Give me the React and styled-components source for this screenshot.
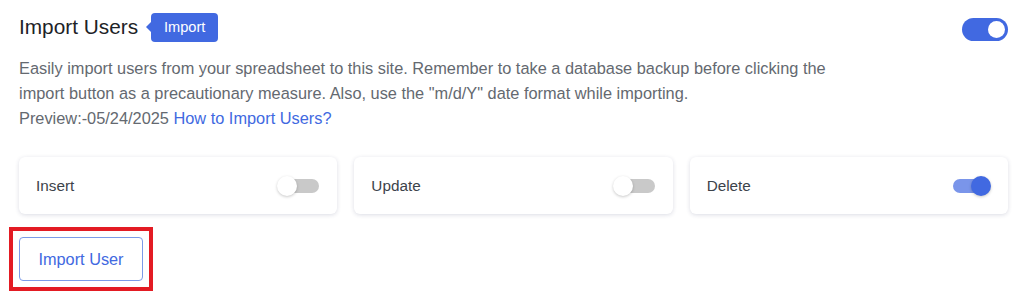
import React from 'react';
import styled, { createGlobalStyle } from 'styled-components';

const GlobalStyle = createGlobalStyle`
  body {
    margin: 0;
    background: #ffffff;
    font-family: 'Liberation Sans', Arial, sans-serif;
  }
`

const options = [
  { label: 'Insert', on: false },
  { label: 'Update', on: false },
  { label: 'Delete', on: true },
]

export default function App() {
  return (
    <>
      <GlobalStyle />
      <Panel>
        <Header>
          <TitleWrap>
            <Title>Import Users</Title>
            <Badge>Import</Badge>
          </TitleWrap>
          <MainSwitch>
            <MainKnob />
          </MainSwitch>
        </Header>
        <Description>
          Easily import users from your spreadsheet to this site. Remember to take a database backup before clicking the
          <br />
          import button as a precautionary measure. Also, use the "m/d/Y" date format while importing.
          <br />
          Preview:-05/24/2025 <HelpLink href="#">How to Import Users?</HelpLink>
        </Description>
        <CardGrid>
          {options.map((opt) => (
            <OptionCard key={opt.label}>
              <OptionLabel>{opt.label}</OptionLabel>
              <SmallSwitch $on={opt.on}>
                <SmallKnob $on={opt.on} />
              </SmallSwitch>
            </OptionCard>
          ))}
        </CardGrid>
        <Highlight>
          <ImportButton type="button">Import User</ImportButton>
        </Highlight>
      </Panel>
    </>
  )
}

// Styled components
const Panel = styled.div`
  padding: 12px 16px 0 19px;
`

const Header = styled.div`
  display: flex;
  align-items: center;
  justify-content: space-between;
  height: 30px;
`

const TitleWrap = styled.div`
  display: flex;
  align-items: center;
  gap: 13px;
`

const Title = styled.h2`
  margin: 0;
  font-size: 20.8px;
  font-weight: 400;
  color: #1d2327;
`

const Badge = styled.span`
  position: relative;
  display: inline-flex;
  align-items: center;
  height: 29px;
  padding: 0 13px;
  border-radius: 4px;
  background: #4169e1;
  color: #ffffff;
  font-size: 14.6px;
  &::before {
    content: '';
    position: absolute;
    left: -5px;
    top: 50%;
    transform: translateY(-50%);
    border-style: solid;
    border-width: 5px 5px 5px 0;
    border-color: transparent #4169e1 transparent transparent;
  }
`

const MainSwitch = styled.div`
  display: flex;
  align-items: center;
  justify-content: flex-end;
  width: 46px;
  height: 23px;
  margin-top: 5px;
  padding: 0 3px;
  box-sizing: border-box;
  border-radius: 12px;
  background: #4169e1;
`

const MainKnob = styled.span`
  width: 17px;
  height: 17px;
  border-radius: 50%;
  background: #ffffff;
`

const Description = styled.p`
  margin: 14px 0 0;
  font-size: 16.35px;
  line-height: 25px;
  color: #646970;
`

const HelpLink = styled.a`
  color: #4169e1;
  text-decoration: none;
`

const CardGrid = styled.div`
  display: grid;
  grid-template-columns: repeat(3, 1fr);
  gap: 17px;
  margin-top: 26px;
`

const OptionCard = styled.div`
  display: flex;
  align-items: center;
  justify-content: space-between;
  height: 57px;
  padding: 0 18px 0 17px;
  border-radius: 6px;
  background: #ffffff;
  box-shadow: 0 1px 4px rgba(30, 40, 90, 0.16);
`

const OptionLabel = styled.span`
  font-size: 15.3px;
  color: #3c434a;
`

const SmallSwitch = styled.div`
  position: relative;
  width: 37px;
  height: 14px;
  border-radius: 7px;
  background: ${(p) => (p.$on ? '#7a95ea' : '#c9c9c9')};
  margin-left: ${(p) => (p.$on ? '0' : '5px')};
`

const SmallKnob = styled.span`
  position: absolute;
  top: -3px;
  left: ${(p) => (p.$on ? '18px' : '-5px')};
  width: 20px;
  height: 20px;
  border-radius: 50%;
  background: ${(p) => (p.$on ? '#4169e1' : '#ffffff')};
  box-shadow: 0 1px 3px rgba(0, 0, 0, 0.22);
`

const Highlight = styled.div`
  display: inline-block;
  margin: 13px 0 0 -10px;
  padding: 6px;
  border: 4px solid #e31b23;
`

const ImportButton = styled.button`
  display: block;
  width: 124px;
  height: 44px;
  border: 1px solid #7b9be8;
  border-radius: 4px;
  background: #ffffff;
  color: #4169e1;
  font-family: 'Liberation Sans', Arial, sans-serif;
  font-size: 16.3px;
`
